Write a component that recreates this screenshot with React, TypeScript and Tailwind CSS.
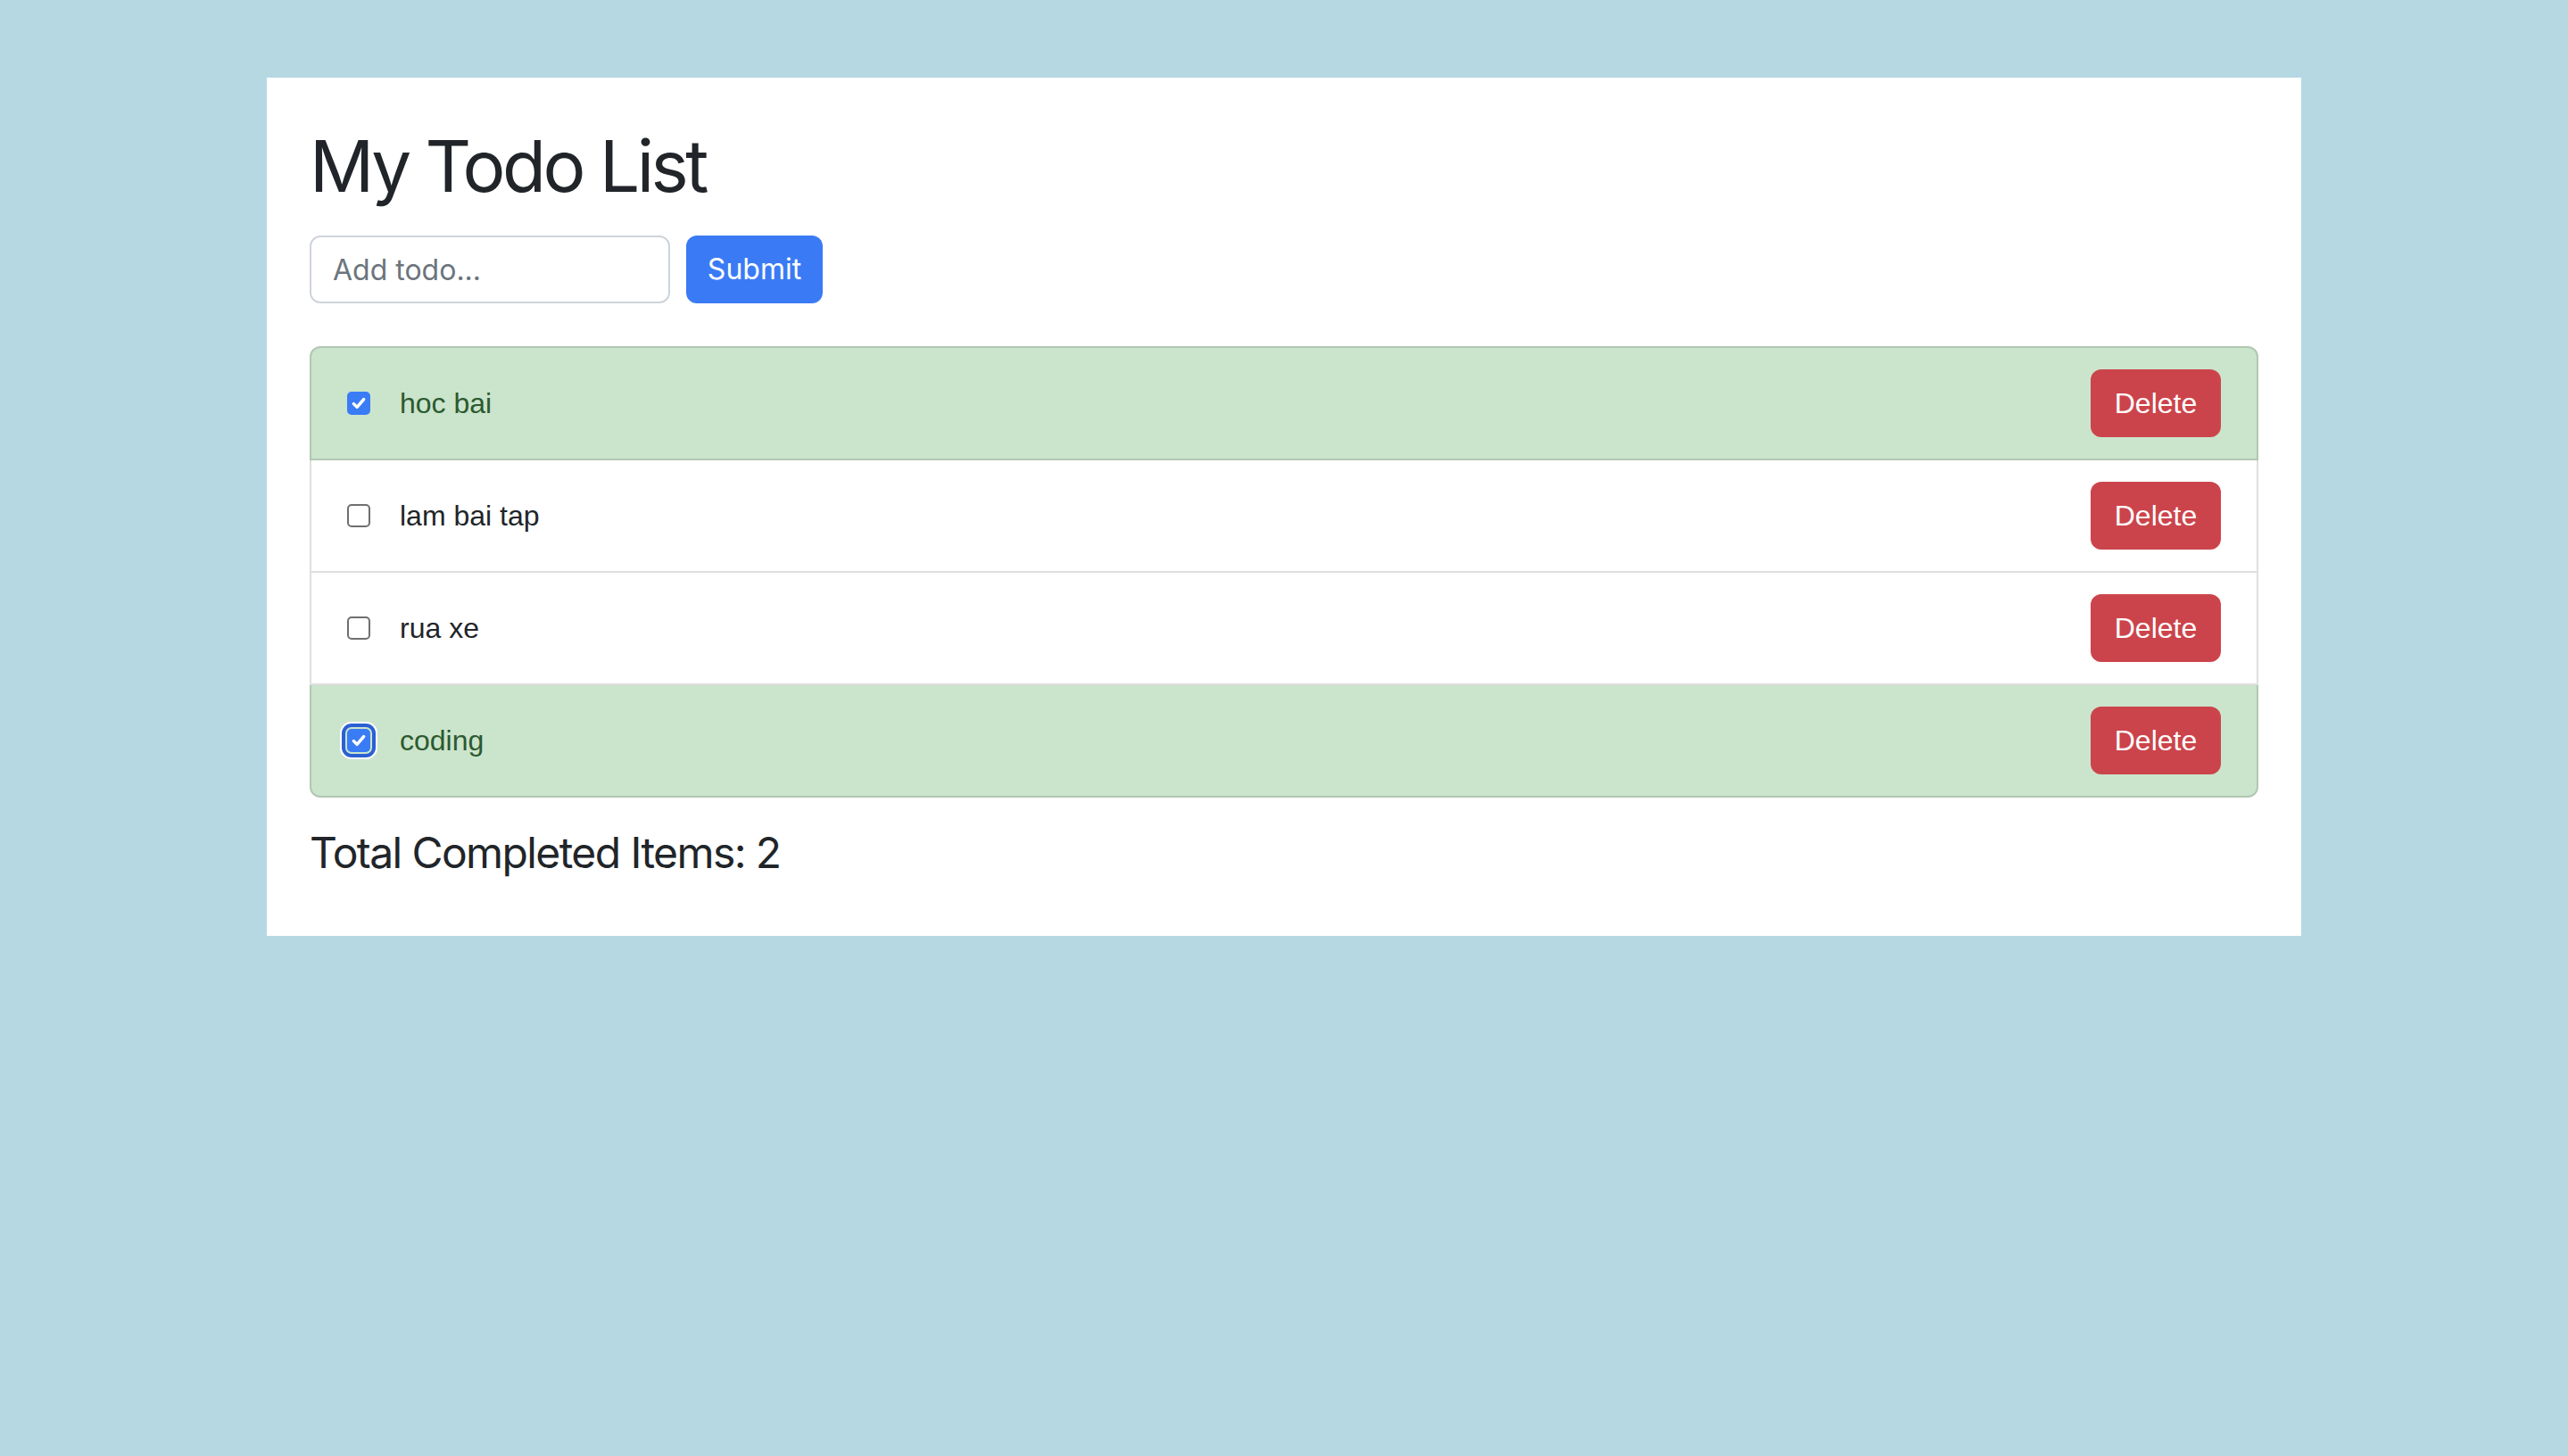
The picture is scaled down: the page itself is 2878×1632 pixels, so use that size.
import React, { useState } from 'react'

type Todo = { id: number; title: string; completed: boolean }

const initialTodos: Todo[] = [
  { id: 1, title: 'hoc bai', completed: true },
  { id: 2, title: 'lam bai tap', completed: false },
  { id: 3, title: 'rua xe', completed: false },
  { id: 4, title: 'coding', completed: true },
]

function CheckBox({ checked, focused, onClick }: { checked: boolean; focused?: boolean; onClick: () => void }) {
  const base = 'flex h-[26px] w-[26px] shrink-0 items-center justify-center rounded-[5px] cursor-pointer'
  const look = checked ? 'bg-[#3a7cf5]' : 'border-2 border-[#6f6f6f] bg-white'
  const ring = focused ? 'shadow-[0_0_0_2px_#cbe4cc,0_0_0_6px_#2b60d4,0_0_0_8px_#ffffff]' : ''
  return (
    <span className={`${base} ${look} ${ring}`} onClick={onClick}>
      {checked && (
        <svg viewBox="0 0 16 16" className="h-[20px] w-[20px]" fill="none">
          <path d="M3.5 8.5l3 3L12.5 4.5" stroke="#ffffff" strokeWidth="2.8" strokeLinecap="round" strokeLinejoin="round" />
        </svg>
      )}
    </span>
  )
}

export default function App() {
  const [todos, setTodos] = useState<Todo[]>(initialTodos)
  const [input, setInput] = useState('')

  const toggle = (id: number) =>
    setTodos(prev => prev.map(t => (t.id === id ? { ...t, completed: !t.completed } : t)))

  const remove = (id: number) => setTodos(prev => prev.filter(t => t.id !== id))

  const submit = (e: React.FormEvent) => {
    e.preventDefault()
    if (!input.trim()) return
    setTodos(prev => [...prev, { id: Date.now(), title: input.trim(), completed: false }])
    setInput('')
  }

  const completed = todos.filter(t => t.completed).length

  return (
    <div className="min-h-[1632px] bg-[#b6d8e3] pt-[87px] font-['Inter',sans-serif] text-[#212529]">
      <div className="mx-auto w-[2280px] bg-white px-[48px] pt-[51px] pb-[48px]">
        <h1 className="mb-[30px] text-[80px] leading-[96px] font-normal tracking-[-3.5px]">My Todo List</h1>

        {/* Add form */}
        <form onSubmit={submit} className="flex items-center gap-[18px]">
          <input
            value={input}
            onChange={e => setInput(e.target.value)}
            placeholder="Add todo..."
            className="h-[76px] w-[404px] rounded-[12px] border-2 border-[#ced4da] bg-white px-[24px] text-[32px] text-[#212529] outline-none placeholder:text-[#6c757d]"
          />
          <button type="submit" className="h-[76px] w-[153px] rounded-[12px] bg-[#3a7bf5] text-[32px] text-white">
            Submit
          </button>
        </form>

        {/* List */}
        <ul className="mt-[48px] font-['Liberation_Sans',Arial,sans-serif]">
          {todos.map((todo, i) => (
            <li
              key={todo.id}
              className={`flex items-center border-x-2 border-b-2 border-[rgba(0,0,0,0.125)] px-[40px] py-[24px] ${
                i === 0 ? 'rounded-t-[12px] border-t-2' : ''
              } ${i === todos.length - 1 ? 'rounded-b-[12px]' : ''} ${
                todo.completed ? 'bg-[#cbe4cc] text-[#2b5a2f]' : 'bg-white text-[#212529]'
              }`}
            >
              <CheckBox checked={todo.completed} focused={todo.id === 4} onClick={() => toggle(todo.id)} />
              <span className="ml-[33px] flex-1 text-[32px]">{todo.title}</span>
              <button
                onClick={() => remove(todo.id)}
                className="h-[76px] w-[146px] rounded-[12px] bg-[#cc444b] text-[32px] text-white"
              >
                Delete
              </button>
            </li>
          ))}
        </ul>

        <h4 className="mt-[33px] mb-[16px] text-[48px] leading-[58px] font-normal tracking-[-1.6px]">
          Total Completed Items: {completed}
        </h4>
      </div>
    </div>
  )
}
